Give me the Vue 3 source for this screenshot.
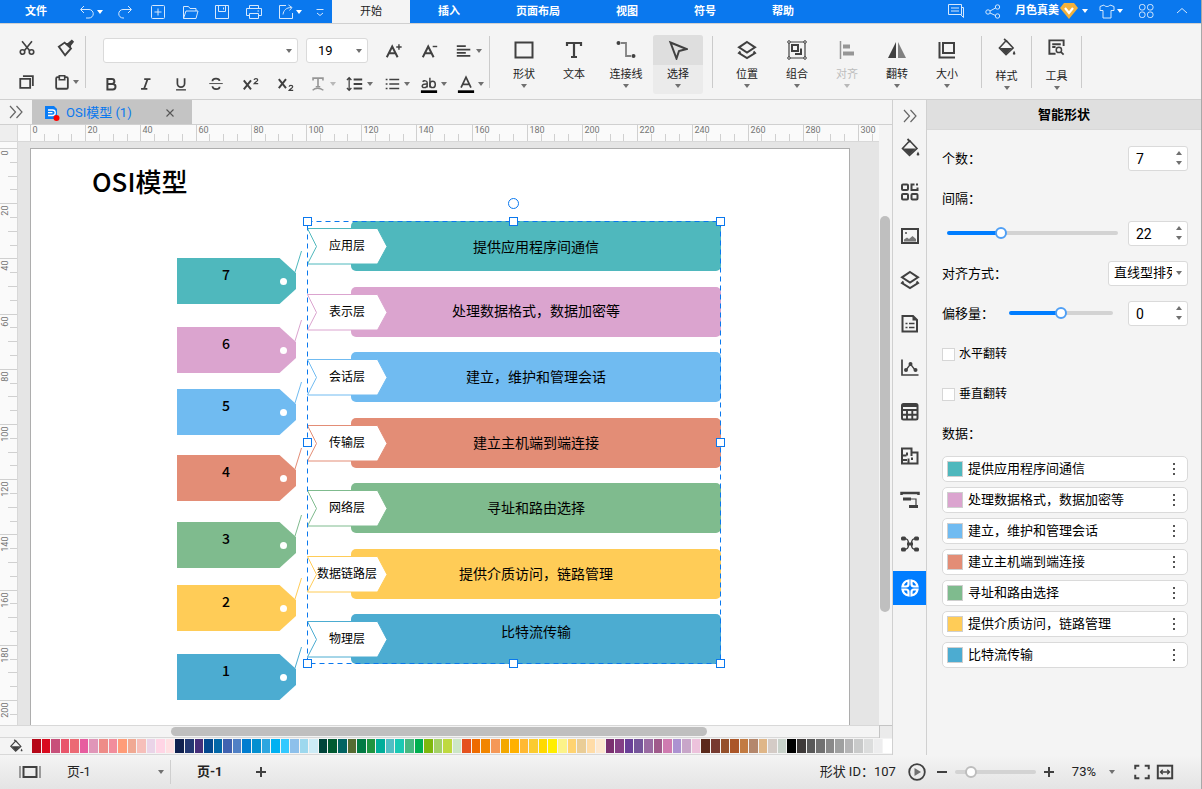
<script setup>
import { ref, computed } from 'vue'

const icons = {
  undo: '<path d="M7 4 3.5 7.5 7 11M4 7.5h8a4.2 4.2 0 0 1 0 8.5H9"/>',
  redo: '<path d="M13 4l3.500 3.500L13 11M16 7.500H8A4.200 4.200 0 0 0 8 16h1"/>',
  add: '<rect x="3.500" y="3.500" width="13" height="13" rx="1"/><path d="M10 6.500v7M6.500 10h7"/>',
  open: '<path d="M3.500 16.500v-12h5l1.500 2h6v2.500M3.500 16.500l2.500-7.500h12l-2 7.500z"/>',
  save: '<path d="M3.500 3.500h13v13h-13zM6.500 3.500v6h7v-6M11.500 5.500v2"/>',
  print: '<path d="M5.500 6.500v-3h9v3M5.500 13.500h-3v-7h15v7h-3M5.500 11.500h9v5h-9zM13.500 9h1.500"/>',
  share: '<path d="M10 3.500H3.500v13h13V11M7 12.500c.5-4 3-7 8.500-7M12.500 3l3.500 2.500-2.500 3"/>',
  more: '<path d="M6.500 7.500h7M7 11l3 2.500 3-2.500"/>',
  chat: '<path d="M2.500 3.500h13v10h-13zM5 7h8M5 10h8M15.500 6.500h2v10l-3-3"/>',
  nodes: '<circle cx="5" cy="11" r="2.200"/><circle cx="14.500" cy="6" r="2.200"/><circle cx="14.500" cy="15" r="2.200"/><path d="m7 10 5.500-3M7 12l5.500 2.500"/>',
  shirt: '<path d="M7 4c1 2 5 2 6 0l4 1.500v4h-3V17H6V9.500H3v-4z"/>',
  apps: '<rect x="3.500" y="3.500" width="5.500" height="5.500" rx="2.200"/><rect x="11.500" y="3.500" width="5.500" height="5.500" rx="2.200"/><rect x="3.500" y="11" width="5.500" height="5.500" rx="2.200"/><rect x="11.500" y="11" width="5.500" height="5.500" rx="2.200"/>',
  up: '<path d="m5 12 5-4.500 5 4.500"/>',
  cut: '<g stroke-width="1.800"><path d="M4.500 2.500 13 13M15.500 2.500 7 13"/><circle cx="5" cy="14.500" r="2.500"/><circle cx="15" cy="14.500" r="2.500"/></g>',
  brush: '<path d="M2 8.500 8.500 4l7 6.500L9 18z" stroke-width="2"/><path d="m8 4.500 4 0 4.500-4L19 3l-3.500 4.500.5 4z" fill="currentColor" stroke="none"/>',
  copy: '<path d="M2.500 6.500h11v10h-11zM5.500 3.500h11v11" stroke-width="2"/>',
  paste: '<rect x="3.500" y="4.500" width="13" height="13" rx="1.500" stroke-width="2"/><path d="M7 3h6v4.500H7z" fill="#f4f4f4" stroke-width="1.800"/>',
  bold: '<path d="M6 4.500h5a2.700 2.700 0 0 1 0 5.500H6zM6 10h6a3 3 0 0 1 0 6H6z" stroke-width="2.200"/>',
  italic: '<path d="M8 4.500h7M4.500 15.500h7M11.800 4.500l-4 11" stroke-width="2"/>',
  underline: '<path d="M6 3.500v6a4 4 0 0 0 8 0v-6" stroke-width="1.900"/><path d="M4.500 16.500h11" stroke-width="1.500"/>',
  strike: '<path d="M14 6.500C13.500 3 6 3 6 7M6 12.500c.5 4.500 8 4 8 .5" stroke-width="1.900"/><path d="M2.500 9.500h15"/>',
  sup: '<path d="m2 6 8 10M10 6 2 16" stroke-width="2.200"/><path d="M13.500 5.500c0-2 4-2 4 0 0 1.500-2.500 2-4 4H18" stroke-width="1.300"/>',
  sub: '<path d="m2 4.500 8 10M10 4.500l-8 10" stroke-width="2.200"/><path d="M13.500 13c0-2 4-2 4 0 0 1.500-2.500 2-4 4H18" stroke-width="1.300"/>',
  effect: '<path d="M4.500 6V3.500h11V6M10 3.500V13M7.500 13h5" stroke-width="1.800"/><path d="M4 17c3-3 8-3 12 0" stroke-width="1.500"/>',
  spacing: '<path d="M8.500 5H18M8.500 10H18M8.500 15H18" stroke-width="2"/><path d="M3.500 4v12M1 5.500 3.500 3 6 5.500M1 14.500 3.500 17 6 14.500" stroke-width="1.400"/>',
  list: '<path d="M7 5h11M7 10h11M7 15h11M3 5h2M3 10h2M3 15h2" stroke-width="1.800"/>',
  mark: '<path d="M3 7.500c1-1.500 5-1.500 5 1V14M8 10c-7-.5-6.500 4-3.500 4 2 0 3.500-1.500 3.500-3M11 3v11" stroke-width="1.600"/><ellipse cx="14" cy="10.500" rx="3" ry="3.500" stroke-width="1.600"/><path d="M1 18.500h18" stroke="#000" stroke-width="3"/>',
  ink: '<path d="M4.500 14 10 2.500 15.500 14M6.500 10.500h7" stroke-width="1.900"/><path d="M1 18.500h18" stroke="#000" stroke-width="3"/>',
  bigger: '<path d="M2 17 8 5l6 12M4.500 12.500h7" stroke-width="2.200"/><path d="M12.500 5.500h6M15.500 2.500v6" stroke-width="1.600"/>',
  smaller: '<path d="M2 17 8 5l6 12M4.500 12.500h7" stroke-width="2.200"/><path d="M13 5h5" stroke-width="1.600"/>',
  align: '<path d="M2 4.500h10M2 8.500h15M2 12h10M2 15.500h15" stroke-width="1.900"/>',
  shape: '<rect x="1.500" y="2.500" width="17" height="15" stroke-width="2"/>',
  text: '<path d="M3 6V3h14v3M10 3v14M7 17h6" stroke-width="2.200"/>',
  connector: '<path d="M5 3h5v13h5" stroke-width="1.800" stroke="#808080"/><circle cx="2.500" cy="3" r="2" fill="currentColor" stroke="none"/><circle cx="17.500" cy="16" r="2" fill="currentColor" stroke="none"/>',
  select: '<path d="M2.500 2.500 18.500 9l-7.500 2-2.500 7.500z" stroke-width="2"/>',
  layers: '<path d="m10 2 8 5.300-8 5.300-8-5.300z" stroke-width="2"/><path d="m3.500 11.500-1.500 1.500 8 5 8-5-1.500-1.500" stroke-width="2"/>',
  group: '<path d="M2 2h16v16H2z" stroke-width="1.200"/><path d="M5 5h6v6H5zM14 8.500V14H8" stroke-width="2"/><g fill="#f4f4f4"><circle cx="2" cy="2" r="1.300"/><circle cx="18" cy="2" r="1.300"/><circle cx="2" cy="18" r="1.300"/><circle cx="18" cy="18" r="1.300"/></g>',
  alignobj: '<path d="M3.500 1v18" stroke-width="1.500"/><path d="M6 6.500h7M6 13.500h11" stroke-width="4"/>',
  flip: '<path d="M9 2v16H1z" fill="currentColor" stroke="none"/><path d="M11 2v16h8z" fill="#808080" stroke="none"/>',
  size: '<path d="M6 3h11v10H6z" stroke-width="2"/><path d="M2.500 2v15.500H18" stroke-width="2"/>',
  fill: '<path d="m9.500 2.500 7.500 8-7.500 7-7-7 6.500-7" stroke-width="1.600"/><path d="m7.500 1 3 3" stroke-width="1.800"/><path d="M3 10.500h13l-6.500 6.500z" fill="currentColor" stroke="none"/><path d="M18 13.500c-2 3.500-1.500 4 0 4s2-.5 0-4z" fill="currentColor" stroke="none"/>',
  tools: '<path d="M9 16.500H2.500v-14h15v6M5.500 6.500h9M5.500 9.500H9" stroke-width="2"/><circle cx="12.500" cy="12.500" r="2.800" stroke-width="1.600"/><path d="m14.500 14.500 3 3" stroke-width="1.800"/>',
  grid: '<g stroke-width="2"><rect x="2" y="2.500" width="6" height="5.500" rx="1"/><rect x="2" y="12" width="6" height="5.500" rx="1"/><rect x="11.500" y="12" width="6" height="5.500" rx="1"/><path d="M14.500 2.500h-3V8h6V5.500"/></g><path d="M16 1.500h2v2h-2z" fill="currentColor" stroke="none"/>',
  image: '<rect x="2" y="3" width="16" height="14" stroke-width="2"/><path d="M4 15.500v-2l3-2 2 1.500 3.500-3L16 13v2.500z" fill="#777" stroke="none"/><path d="M5 6h2v2H5z" fill="#777" stroke="none"/>',
  page: '<path d="M2.500 2h10.500l4 4v11.500H2.500z" stroke-width="2"/><path d="M12.500 2v4.500H17z" fill="currentColor" stroke="none"/><path d="M5.500 9.500h2M9 9.500h5.500M5.500 13.500h2M9 13.500h5.500" stroke-width="1.600"/>',
  chart: '<path d="M2 1.500V17h16.500" stroke-width="1.700"/><path d="m6 12 4.500-6 4.500 6" stroke-width="1.300"/><g fill="currentColor" stroke="none"><circle cx="6" cy="12" r="2"/><circle cx="10.500" cy="6" r="2"/><circle cx="15.500" cy="12" r="2"/></g>',
  table: '<rect x="2" y="2" width="15.500" height="15.500" rx="1.500" stroke-width="2"/><path d="M2 4h15M2 8h15.500M2 12.800h15.500M7 8v9.500M12.300 8v9.500" stroke-width="1.900"/>',
  floor: '<path d="M2 2.500h9.500v4H17.500v11H2zM2 9.500h4.500M7 6.500v3M2 14h5M8.500 12.500v5M11.500 6.500v3.500M12 14v-2.500" stroke-width="2"/>',
  timeline: '<path d="M1.500 5V3h17v2" stroke-width="2.500"/><path d="M3 9h8M9 16.500h9" stroke-width="2.800"/><path d="M11 9h5v6" stroke-width="1.200"/>',
  mind: '<path d="M4 4.500c4 0 4.500 2 4.500 5.500S8 15.500 4 15.500M16 4.500c-4 0-4.500 2-4.500 5.500s.5 5.500 4.500 5.500" stroke-width="1.500"/><g fill="currentColor" stroke="none"><rect x="1" y="2.500" width="5" height="4" rx="1.500"/><rect x="14" y="2.500" width="5" height="4" rx="1.500"/><rect x="1" y="13.500" width="5" height="4" rx="1.500"/><rect x="14" y="13.500" width="5" height="4" rx="1.500"/><rect x="7" y="8.500" width="6" height="3"/></g>',
  smart: '<g stroke-width="2.200"><path d="M8.500 2.500v3.500c0 1.500-1 2.500-2.500 2.500H2.500c.5-3 3-5.500 6-6zM11.500 2.500v3.500c0 1.500 1 2.500 2.500 2.500h3.500c-.5-3-3-5.500-6-6zM8.500 17.500V14c0-1.500-1-2.500-2.500-2.500H2.500c.5 3 3 5.500 6 6zM11.500 17.500V14c0-1.500 1-2.500 2.500-2.500h3.500c-.5 3-3 5.500-6 6z"/></g>',
  chevrons: '<path d="m4 4 5.500 6L4 16M10.500 4l5.500 6-5.500 6" stroke-width="1.200"/>',
  plus: '<path d="M10 5v10M5 10h10" stroke-width="2"/>',
  minus: '<path d="M5 10h10" stroke-width="2"/>',
  close: '<path d="m6.500 6.500 7 7M13.500 6.500l-7 7" stroke-width="1.100"/>',
  play: '<circle cx="10" cy="10" r="7.800" stroke-width="1.800"/><path d="m7.500 6 6.500 4-6.500 4z" fill="#707070" stroke="none"/>',
  full: '<path d="M2.500 7V3H7M13 3h4.500v4M17.500 13v4H13M7 17H2.500v-4" stroke-width="2.200"/>',
  fit: '<rect x="2" y="3" width="16" height="14" stroke-width="2.200"/><path d="M5.500 10h9M7.500 7.500 5 10l2.500 2.500M12.500 7.500 15 10l-2.500 2.500" stroke-width="1.500"/>',
  dots: '<path d="M9 4h2v2H9zM9 9h2v2H9zM9 14h2v2H9z" fill="currentColor" stroke="none"/>'
}

const quick = [
  { icon: 'undo', label: '撤销', w: 'w36', caret: true },
  { icon: 'redo', label: '重做', w: 'w34' },
  { icon: 'add', label: '新建', w: 'w32' },
  { icon: 'open', label: '打开', w: 'w32' },
  { icon: 'save', label: '保存', w: 'w32' },
  { icon: 'print', label: '打印', w: 'w32' },
  { icon: 'share', label: '导出', w: 'w38', caret: true },
  { icon: 'more', label: '更多', w: 'w24' }
]
const menus = ['开始', '插入', '页面布局', '视图', '符号', '帮助']

const formats = [
  { icon: 'bold', label: '加粗' },
  { icon: 'italic', label: '斜体' },
  { icon: 'underline', label: '下划线' },
  { icon: 'strike', label: '删除线' },
  { icon: 'sup', label: '上标' },
  { icon: 'sub', label: '下标' },
  { icon: 'effect', label: '文字效果', caret: true, off: true },
  { icon: 'spacing', label: '行距', caret: true },
  { icon: 'list', label: '项目符号', caret: true },
  { icon: 'mark', label: '突出显示', caret: true },
  { icon: 'ink', label: '字体颜色', caret: true }
]
const toolGroups = [
  { cls: 'draw', tools: [
    { icon: 'shape', label: '形状', caret: true },
    { icon: 'text', label: '文本' },
    { icon: 'connector', label: '连接线', caret: true },
    { icon: 'select', label: '选择', caret: true, on: true }
  ] },
  { cls: 'arrange', tools: [
    { icon: 'layers', label: '位置', caret: true },
    { icon: 'group', label: '组合', caret: true },
    { icon: 'alignobj', label: '对齐', caret: true, off: true },
    { icon: 'flip', label: '翻转', caret: true },
    { icon: 'size', label: '大小', caret: true }
  ] },
  { cls: 'single', tools: [{ icon: 'fill', label: '样式', caret: true }] },
  { cls: 'single', tools: [{ icon: 'tools', label: '工具', caret: true }] }
]
const strip = ['fill', 'grid', 'image', 'layers', 'page', 'chart', 'table', 'floor', 'timeline', 'mind', 'smart']
const stripLabels = ['填充', '符号库', '图片', '图层', '页面', '图表', '表格', '平面图', '时间线', '思维导图', '智能形状']

const UNIT = 2.76
const scale = end => {
  const all = Array.from({ length: end / 5 + 1 }, (_, i) => ({ v: i * 5, at: Math.round(i * 5 * UNIT) + 0.5 }))
  return { major: all.filter(t => t.v % 20 === 0), minor: all.filter(t => t.v % 20 !== 0) }
}
const across = scale(305)
const down = scale(205)

const layers = [
  { no: 7, name: '应用层', desc: '提供应用程序间通信', color: '#4fb8bd', bar: 221, tag: 258, ty: 26 },
  { no: 6, name: '表示层', desc: '处理数据格式，数据加密等', color: '#dba4cf', bar: 287, tag: 327, ty: 24 },
  { no: 5, name: '会话层', desc: '建立，维护和管理会话', color: '#70bbf1', bar: 352, tag: 389, ty: 25 },
  { no: 4, name: '传输层', desc: '建立主机端到端连接', color: '#e38d76', bar: 418, tag: 455, ty: 25 },
  { no: 3, name: '网络层', desc: '寻址和路由选择', color: '#7fbb8e', bar: 483, tag: 522, ty: 25 },
  { no: 2, name: '数据链路层', desc: '提供介质访问，链路管理', color: '#ffcc57', bar: 549, tag: 585, ty: 25 },
  { no: 1, name: '物理层', desc: '比特流传输', color: '#4cacd1', bar: 614, tag: 654, ty: 18 }
]
const tagPoints = y => `177,${y} 279.5,${y} 296,${y + 15} 296,${y + 31} 279.5,${y + 46} 177,${y + 46}`
const chevron = y => `307.5,${y + 7.5} 377.5,${y + 7.5} 387,${y + 25.5} 377.5,${y + 43} 307.5,${y + 43} 316.5,${y + 25.5}`
const handles = [[307.5, 221.5], [513.5, 221.5], [720.5, 221.5], [307.5, 442.5], [720.5, 442.5], [307.5, 663.5], [513.5, 663.5], [720.5, 663.5]]

const palette = (
  'b60718 d90b1f c8507a e9566b ec6a74 e75d9f e096b8 ee8c88 f28d9c ff9c78 f0a993 f6bfba ead4e8 ffd5e5 ffe0e3 ' +
  '10214f 233872 462f7a 04488f 0267a8 4062b0 5080c5 007dd0 048fd0 2da6e0 00b1f2 33c9ff 8dc0eb 9dd8ee cdebf6 ' +
  '00443a 005a31 026462 566b32 027a44 1f9440 00ae9a 52bec3 1ac9b3 46b881 00af50 7fb80e a4d166 bfd93f cde6c8 ' +
  'e5521f ee6b00 f28500 f59858 f3a800 ffb100 ffb933 fbcb30 ffd900 ffee00 fcf389 ffd371 eacd97 ffdca8 fde8d0 ' +
  '7a3070 843f85 6a4098 75559a 9a6ba2 a05a8b cf7bb0 ac92d1 c8a6c9 edc2dc ' +
  '5b2a1b 773a30 95502b ab5628 c27b42 b4876c dfb688 d4cbc6 c8d2ca ' +
  '000000 3e3a39 595959 717171 898989 9fa0a0 b5b5b6 c9caca dcdddd ededee ffffff'
).split(' ')

const count = ref(7)
const gap = ref(22)
const gapPos = ref(30)
const offset = ref(0)
const offsetPos = ref(50)
const zoomPos = ref(14)
const track = v => ({ '--fill': `${v}%` })
const gapTrack = computed(() => track(gapPos.value))
const offsetTrack = computed(() => track(offsetPos.value))
</script>

<template>
  <div class="app">
    <header class="top">
      <button class="file">文件</button>
      <button v-for="q in quick" :key="q.icon" class="tb" :class="q.w" :aria-label="q.label">
        <svg class="ic" viewBox="0 0 20 20" v-html="icons[q.icon]" /><i v-if="q.caret" class="caret" />
      </button>
      <nav class="menus">
        <button v-for="(m, i) in menus" :key="m" :class="{ on: i === 0 }">{{ m }}</button>
      </nav>
      <div class="account">
        <button class="tb w38" aria-label="消息"><svg class="ic" viewBox="0 0 20 20" v-html="icons.chat" /></button>
        <button class="tb w36" aria-label="分享"><svg class="ic" viewBox="0 0 20 20" v-html="icons.nodes" /></button>
        <button class="user">月色真美
          <svg class="gem" viewBox="0 0 18 16"><path d="M4 0h10l4 5-9 11L0 5z" fill="#f2b13c" /><path d="m5 5 4 5 4-5" fill="none" stroke="#fff" stroke-width="2.200" /></svg>
          <i class="caret" />
        </button>
        <button class="tb w38" aria-label="主题"><svg class="ic" viewBox="0 0 20 20" v-html="icons.shirt" /><i class="caret" /></button>
        <button class="tb w34" aria-label="应用"><svg class="ic" viewBox="0 0 20 20" v-html="icons.apps" /></button>
        <button class="tb w38" aria-label="收起"><svg class="ic" viewBox="0 0 20 20" v-html="icons.up" /></button>
      </div>
    </header>

    <section class="ribbon">
      <div class="clip">
        <button aria-label="剪切"><svg class="ic" viewBox="0 0 20 20" v-html="icons.cut" /></button>
        <button aria-label="格式刷"><svg class="ic" viewBox="0 0 20 20" v-html="icons.brush" /></button>
        <button aria-label="复制"><svg class="ic" viewBox="0 0 20 20" v-html="icons.copy" /></button>
        <button aria-label="粘贴" class="paste"><svg class="ic" viewBox="0 0 20 20" v-html="icons.paste" /><i class="caret" /></button>
      </div>
      <div class="font">
        <div class="frow first">
          <span class="pick family"><select aria-label="字体"><option></option></select><i class="caret" /></span>
          <span class="pick size"><select aria-label="字号"><option>19</option></select><i class="caret" /></span>
          <button aria-label="增大字号"><svg class="ic" viewBox="0 0 20 20" v-html="icons.bigger" /></button>
          <button aria-label="减小字号"><svg class="ic" viewBox="0 0 20 20" v-html="icons.smaller" /></button>
          <button aria-label="对齐方式" class="para"><svg class="ic" viewBox="0 0 20 20" v-html="icons.align" /><i class="caret" /></button>
        </div>
        <div class="frow second">
          <button v-for="f in formats" :key="f.icon" :aria-label="f.label" :class="{ drop: f.caret, off: f.off }">
            <svg class="ic" viewBox="0 0 20 20" v-html="icons[f.icon]" /><i v-if="f.caret" class="caret" />
          </button>
        </div>
      </div>
      <div v-for="(g, gi) in toolGroups" :key="gi" class="tools" :class="g.cls">
        <button v-for="t in g.tools" :key="t.label" :class="{ on: t.on, off: t.off }">
          <span class="pic"><svg class="ic" viewBox="0 0 20 20" v-html="icons[t.icon]" /></span>
          <span class="lab">{{ t.label }}</span>
          <i v-if="t.caret" class="caret" />
        </button>
      </div>
    </section>

    <main class="body">
      <section class="work">
        <div class="tabs">
          <button class="expand" aria-label="展开"><svg class="ic" viewBox="0 0 20 20" v-html="icons.chevrons" /></button>
          <div class="doc">
            <svg class="docicon" viewBox="0 0 16 16"><path d="M1 1h9l3 3v10H1z" fill="#0a7cf5" /><path d="M4 5h4.500a2.500 2.500 0 0 1 0 5.500H4M4 7.700h4.500" fill="none" stroke="#fff" stroke-width="1.300" /><circle cx="12.500" cy="13" r="3" fill="#f00" /></svg>
            <span class="docname">OSI模型 (1)</span>
            <button aria-label="关闭"><svg class="ic" viewBox="0 0 20 20" v-html="icons.close" /></button>
          </div>
        </div>
        <div class="stage">
          <div class="corner" />
          <svg class="ruler across">
            <path v-for="t in across.major" :key="t.v" :d="`M${t.at + 12} 0v17`" />
            <path v-for="t in across.minor" :key="t.v" :d="`M${t.at + 12} 9v8`" />
            <text v-for="t in across.major" :key="'t' + t.v" :x="t.at + 14" y="8">{{ t.v }}</text>
          </svg>
          <div class="blank" />
          <svg class="ruler down">
            <path v-for="t in down.major" :key="t.v" :d="`M0 ${t.at + 6}h17`" />
            <path v-for="t in down.minor" :key="t.v" :d="`M${t.v % 10 ? 10 : 8} ${t.at + 6}h9`" />
            <text v-for="t in down.major" :key="'t' + t.v" text-anchor="end" :transform="`translate(8 ${t.at + 8}) rotate(-90)`">{{ t.v }}</text>
          </svg>
          <svg class="canvas">
            <g transform="translate(-18 -142)">
              <rect x="30.500" y="148.500" width="819" height="900" fill="#fff" stroke="#adadad" />
              <text class="title" x="92" y="192">OSI模型</text>
              <g v-for="l in layers" :key="l.no">
                <polygon :points="tagPoints(l.tag)" :fill="l.color" />
                <circle cx="283.500" :cy="l.tag + 23.5" r="3.500" fill="#fff" />
                <path :d="`M295 ${l.tag + 14}L301.5 ${l.tag - 7}`" :stroke="l.color" />
                <text class="no" x="226" :y="l.tag + 22">{{ l.no }}</text>
                <rect x="351" :y="l.bar" width="370" height="50" rx="5" :fill="l.color" />
                <polygon :points="chevron(l.bar)" :stroke="l.color" fill="#fff" />
                <text class="name" x="347" :y="l.bar + 29">{{ l.name }}</text>
                <text class="desc" x="536" :y="l.bar + l.ty + 5">{{ l.desc }}</text>
              </g>
              <g class="sel">
                <rect class="dash" x="307.500" y="221.500" width="413" height="442" />
                <rect v-for="(h, i) in handles" :key="i" :x="h[0] - 4" :y="h[1] - 4" width="8" height="8" />
                <circle cx="513.500" cy="203.500" r="5" />
              </g>
            </g>
          </svg>
          <div class="vscroll"><i /></div>
          <div class="hscroll"><i /></div>
          <div class="grip" />
        </div>
        <div class="palette">
          <button class="nofill" aria-label="填充颜色"><svg class="ic" viewBox="0 0 20 20" v-html="icons.fill" /></button>
          <button v-for="c in palette" :key="c" class="sw" :aria-label="'#' + c" :style="{ background: '#' + c }" />
        </div>
      </section>

      <aside class="strip">
        <button class="fold" aria-label="折叠"><svg class="ic" viewBox="0 0 20 20" v-html="icons.chevrons" /></button>
        <button v-for="(s, i) in strip" :key="s" class="side" :class="{ on: s === 'smart' }" :aria-label="stripLabels[i]">
          <svg class="ic" viewBox="0 0 20 20" v-html="icons[s]" />
        </button>
      </aside>

      <aside class="panel">
        <h2>智能形状</h2>
        <div class="form">
          <div class="row">
            <label for="count">个数：</label>
            <span class="num"><input id="count" v-model="count" type="number"><span class="spin"><button aria-label="增加" class="inc" /><button aria-label="减少" class="dec" /></span></span>
          </div>
          <div class="row"><label for="gap">间隔：</label></div>
          <div class="row slide">
            <input v-model="gapPos" class="range" type="range" aria-label="间隔滑块" :style="gapTrack">
            <span class="num"><input id="gap" v-model="gap" type="number"><span class="spin"><button aria-label="增加" class="inc" /><button aria-label="减少" class="dec" /></span></span>
          </div>
          <div class="row">
            <label for="mode">对齐方式：</label>
            <span class="pick mode"><select id="mode"><option>直线型排列</option></select><i class="caret" /></span>
          </div>
          <div class="row offset">
            <label for="offset">偏移量：</label>
            <input v-model="offsetPos" class="range" type="range" aria-label="偏移量滑块" :style="offsetTrack">
            <span class="num"><input id="offset" v-model="offset" type="number"><span class="spin"><button aria-label="增加" class="inc" /><button aria-label="减少" class="dec" /></span></span>
          </div>
          <label class="row check"><input type="checkbox">水平翻转</label>
          <label class="row check"><input type="checkbox">垂直翻转</label>
          <div class="row"><span class="cap">数据：</span></div>
          <ul>
            <li v-for="l in layers" :key="l.no">
              <i :style="{ background: l.color }" /><span>{{ l.desc }}</span>
              <button aria-label="更多"><svg class="ic" viewBox="0 0 20 20" v-html="icons.dots" /></button>
            </li>
          </ul>
        </div>
      </aside>
    </main>

    <footer class="status">
      <button class="views" aria-label="页面视图"><svg viewBox="0 0 22 14"><path d="M4.500 2h13v10h-13z" fill="none" stroke="currentColor" stroke-width="2" /><path d="M1 1v12M21 1v12" stroke="#808080" stroke-width="1.500" /></svg></button>
      <span class="pages"><select aria-label="页面"><option>页-1</option></select><i class="caret" /></span>
      <button class="pagetab">页-1</button>
      <button aria-label="添加页面" class="addpage"><svg class="ic" viewBox="0 0 20 20" v-html="icons.plus" /></button>
      <span class="shapeid">形状 ID：107</span>
      <button aria-label="播放" class="play"><svg class="ic" viewBox="0 0 20 20" v-html="icons.play" /></button>
      <button aria-label="缩小" class="step"><svg class="ic" viewBox="0 0 20 20" v-html="icons.minus" /></button>
      <input v-model="zoomPos" class="range zoom" type="range" aria-label="缩放">
      <button aria-label="放大" class="step"><svg class="ic" viewBox="0 0 20 20" v-html="icons.plus" /></button>
      <button class="percent">73%<i class="caret" /></button>
      <button aria-label="全屏" class="view"><svg class="ic" viewBox="0 0 20 20" v-html="icons.full" /></button>
      <button aria-label="适合宽度" class="view"><svg class="ic" viewBox="0 0 20 20" v-html="icons.fit" /></button>
    </footer>
  </div>
</template>

<style>
body { margin: 0; }
</style>

<style scoped>
.app {
  display: flex;
  flex-direction: column;
  height: 100vh;
  box-sizing: border-box;
  border-right: 1px solid #a8a8a8;
  background: #f4f4f4;
  color: #000;
  font: 13px/16px Roboto, "Noto Sans CJK SC", sans-serif;
  overflow: hidden;
}
.app * { box-sizing: border-box; }
button, select, input { font: inherit; color: inherit; }
button { border: 0; padding: 0; margin: 0; background: none; display: flex; align-items: center; justify-content: center; }
select { appearance: none; border: 0; background: none; padding: 0; outline: 0; min-width: 0; flex: 1; }
.ic { display: block; width: 20px; height: 20px; flex: none; fill: none; stroke: currentColor; }
.caret { flex: none; width: 0; height: 0; border: 3px solid transparent; border-top: 4px solid #707070; border-bottom: 0; }

.top { flex: none; display: flex; height: 24px; background: #0a78ee; color: #fff; border-bottom: 1px solid #d0d0d0; font-size: 11px; font-weight: 700; }
.top .ic { width: 20px; height: 20px; }
.top .tb { color: #d5e8fd; gap: 0; }
.top .caret { border-top-color: #fff; }
.file { width: 72px; }
.w24 { width: 24px; }
.w32 { width: 32px; }
.w34 { width: 34px; }
.w36 { width: 36px; }
.w38 { width: 38px; }
.menus { display: flex; }
.menus button { padding: 0 28px; }
.menus .on { background: #f4f4f4; color: #222; font-weight: 400; }
.account { display: flex; margin-left: auto; height: 21px; }
.user { padding: 0 3px 0 4px; gap: 1px; }
.user .gem { width: 18px; height: 16px; }
.user .caret { margin-left: 3px; }

.ribbon { flex: none; display: flex; align-items: flex-start; height: 76px; padding-top: 12px; border-bottom: 1px solid #d0d0d0; color: #404040; }
.ribbon > div { height: 52px; border-right: 1px solid #cbcbcb; }
.ribbon > .clip { width: 86px; padding-left: 7px; display: grid; grid-template-columns: 40px 38px; grid-template-rows: 24px 24px; row-gap: 10px; }
.clip .ic { width: 18px; height: 18px; }
.paste { gap: 2px; }
.font { width: 404px; display: flex; flex-direction: column; gap: 8px; padding-top: 2px; }
.frow { flex: none; display: flex; height: 25px; }
.frow button { width: 35px; gap: 1px; }
.frow .ic { width: 18px; height: 18px; }
.first { padding-left: 17px; }
.first button { width: 36px; }
.first .para { margin-left: 2px; gap: 3px; }
.first .size { margin: 0 8px; }
.second { padding-left: 7px; }
.second .drop { width: 37px; gap: 2px; }
.second .drop .ic { width: 20px; }
.off { color: #969696; }
.off .caret { border-top-color: #b8b8b8; }
.pick { display: flex; align-items: center; height: 25px; border: 1px solid #dadada; border-radius: 3px; background: #fff; color: #000; }
.pick .caret { margin-right: 5px; }
.family { width: 195px; }
.size { width: 62px; }
.size select { padding-left: 11px; }
.tools { display: flex; align-items: flex-start; }
.tools button { width: 50px; height: 59px; flex-direction: column; justify-content: flex-start; border-radius: 3px; flex: none; margin-top: -1px; }
.tools .pic { display: flex; width: 100%; height: 30px; align-items: center; justify-content: center; border-radius: 3px 3px 0 0; }
.tools .lab { font-size: 11px; line-height: 16px; margin-top: 2px; color: #222; white-space: nowrap; }
.tools .off .lab { color: #bdbdbd; }
.tools .caret { margin-top: 1px; }
.draw { padding: 0 9px; }
.draw button:nth-child(n+3) { margin-left: 2px; }
.tools .on { background: #ebebeb; }
.tools .on .pic { background: #dedede; }
.arrange { padding: 0 9px; }
.single button { width: 49px; }
.single button .ic { width: 19px; height: 19px; }
.single .pic { height: 24px; }
.single .lab { margin-top: 10px; }
.arrange + .single .pic { padding-right: 1px; }

.body { flex: 1; min-height: 0; display: flex; }
.work { flex: 1; min-width: 0; display: flex; flex-direction: column; }
.tabs { flex: none; display: flex; height: 25px; border-bottom: 1px solid #d0d0d0; }
.expand { width: 32px; color: #666; }
.doc { width: 160px; display: flex; align-items: center; background: #c4c4c4; padding: 2px 0 0 12px; color: #0a78ee; }
.docicon { width: 16px; height: 16px; margin-right: 6px; }
.docname { flex: 1; white-space: nowrap; }
.doc button { color: #555; margin-right: 12px; }
.stage { flex: 1; min-height: 0; display: grid; grid-template-columns: 18px minmax(0, 1fr) 13px; grid-template-rows: 17px minmax(0, 1fr) 13px; }
.corner { background: #eee; border-right: 1px solid #d8d8d8; border-bottom: 1px solid #d8d8d8; }
.ruler { display: block; width: 100%; height: 100%; background: #fafafa; font-size: 9px; overflow: hidden; }
.ruler path { stroke: #d0d0d0; }
.ruler text { fill: #757575; }
.across { border-bottom: 1px solid #d8d8d8; }
.down { border-right: 1px solid #d8d8d8; }
.canvas { display: block; width: 100%; height: 100%; background: #e5e5e5; overflow: hidden; font-family: "Noto Sans CJK SC", sans-serif; }
.title { font-size: 26px; font-weight: 500; }
.no { font-size: 14px; font-weight: 500; text-anchor: middle; }
.name { font-size: 12px; text-anchor: middle; }
.desc { font-size: 14px; text-anchor: middle; }
.sel rect, .sel circle { fill: #fff; stroke: #0a78ee; }
.sel .dash { fill: none; stroke-dasharray: 5 4; }
.vscroll i { display: block; width: 10px; height: 68%; margin: 74px 0 0 1px; border-radius: 5px; background: #bfbfbf; }
.hscroll { grid-column: 1 / 3; border: 1px solid #d8d8d8; border-width: 1px 0; }
.hscroll i { display: block; width: 61%; height: 9px; margin: 1px 0 0 171px; border-radius: 5px; background: #bfbfbf; }
.grip { background: #ebebeb; border: 1px solid #c4c4c4; border-width: 1px 0 0 1px; }
.palette { flex: none; display: flex; height: 17px; gap: 1px; padding: 1px 0 2px; border-bottom: 1px solid #d8d8d8; }
.palette .nofill { flex: none; width: 31px; color: #404040; }
.nofill .ic { width: 14px; height: 14px; }
.sw { flex: 1; height: 14px; }

.strip { flex: none; width: 35px; border: 1px solid #d0d0d0; border-width: 0 1px; display: flex; flex-direction: column; color: #404040; }
.fold { height: 31px; color: #666; }
.side { height: 34px; margin-bottom: 10px; }
.side.on { background: #007dff; color: #fff; }

.panel { flex: none; width: 274px; }
h2 { margin: 0; height: 30px; background: #dfdfdf; font-size: 13px; line-height: 30px; text-align: center; font-weight: 700; border-bottom: 1px solid #d8d8d8; }
.form { padding: 8px 13px 0 15px; }
.row { display: flex; align-items: center; justify-content: space-between; height: 40px; }
.row label, .cap { padding-top: 2px; }
.row.slide { height: 30px; margin-bottom: 5px; padding-left: 5px; gap: 10px; }
.offset label { width: 67px; }
.offset .num { margin-left: 15px; }
.check { justify-content: flex-start; gap: 4px; padding-top: 2px; font-size: 12px; }
.check input { appearance: none; width: 13px; height: 13px; margin: 0; border: 1px solid #d6d6d6; background: #fff; }
.num { flex: none; display: flex; width: 60px; height: 25px; border: 1px solid #dadada; border-radius: 3px; background: #fff; }
.num input { appearance: textfield; flex: 1; min-width: 0; border: 0; padding: 2px 0 0 7px; background: none; outline: 0; font-size: 14px; }
.num input::-webkit-inner-spin-button { appearance: none; display: none; }
.spin { width: 16px; display: flex; flex-direction: column; justify-content: center; align-items: center; gap: 6px; }
.inc, .dec { width: 0; height: 0; border: 3px solid transparent; }
.inc { border-bottom: 4px solid #707070; border-top: 0; }
.dec { border-top: 4px solid #707070; border-bottom: 0; }
.mode { width: 80px; padding-left: 5px; gap: 4px; }
.mode select { overflow: hidden; text-overflow: clip; }
.range { appearance: none; flex: 1; min-width: 0; height: 14px; margin: 0; background: none; }
.range::-webkit-slider-runnable-track { height: 4px; border-radius: 2px; background: linear-gradient(to right, #007dff var(--fill), #d3d3d3 var(--fill)); }
.range::-webkit-slider-thumb { appearance: none; width: 12px; height: 12px; margin-top: -4px; border: 2px solid #4f9ff5; border-radius: 50%; background: #fff; }
ul { list-style: none; margin: 3px 0 0; padding: 0; display: grid; gap: 5px; }
li { display: flex; align-items: center; height: 26px; padding: 0 3px 0 4px; border: 1px solid #dadada; border-radius: 5px; background: #fff; }
li i { width: 16px; height: 16px; border: 1px solid #cfcfcf; margin-right: 5px; }
li span { flex: 1; }
li button { color: #555; }

.status { flex: none; display: flex; align-items: center; height: 34px; background: linear-gradient(#f4f4f4, #e4e4e4); color: #222; }
.views { width: 60px; color: #404040; }
.views svg { width: 22px; height: 14px; }
.pages { display: flex; align-items: center; width: 111px; height: 24px; padding: 0 6px 0 7px; border-right: 1px solid #cfcfcf; }
.pagetab { padding: 0 28px 0 26px; font-weight: 700; }
.addpage { width: 20px; color: #404040; }
.shapeid { margin-left: auto; margin-right: 11px; }
.status .ic { color: #404040; }
.step { width: 20px; }
.play { margin-right: 5px; }
.range.zoom { flex: none; width: 81px; margin: 0 3px; }
.zoom::-webkit-slider-runnable-track { background: #d3d3d3; }
.zoom::-webkit-slider-thumb { border-color: #bdbdbd; }
.percent { gap: 13px; margin: 0 15px 0 13px; }
.view { width: 23px; }
.view .ic { width: 18px; height: 18px; }
.view:last-child { margin-right: 25px; }
</style>
